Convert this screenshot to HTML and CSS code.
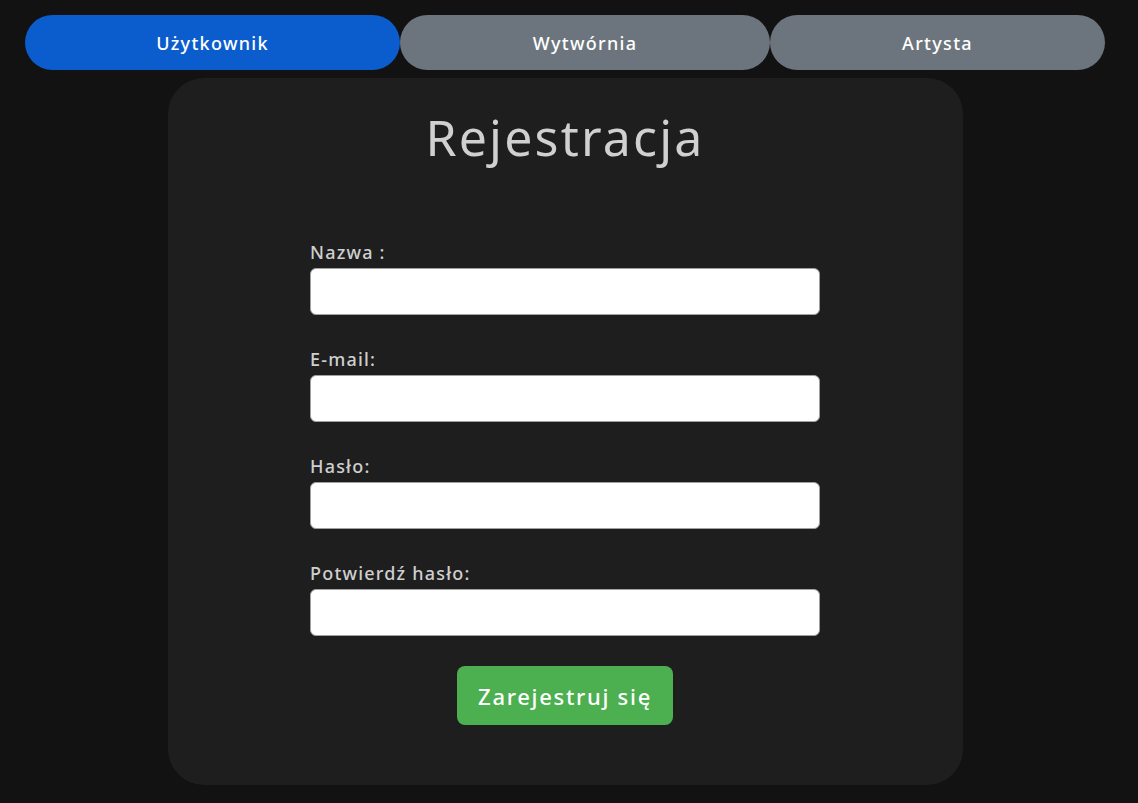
FILE: index.html
```html
<!DOCTYPE html>
<html lang="pl">
<head>
<meta charset="utf-8">
<title>Rejestracja</title>
<link rel="stylesheet" href="styles.css">
</head>
<body>
<div class="page">
  <nav class="tabs">
    <button class="tab tab-active" type="button">Użytkownik</button>
    <button class="tab" type="button">Wytwórnia</button>
    <button class="tab" type="button">Artysta</button>
  </nav>
  <main class="card">
    <h1 class="title">Rejestracja</h1>
    <form class="form">
      <div class="field">
        <label class="label" for="name">Nazwa :</label>
        <input class="input" id="name" type="text">
      </div>
      <div class="field">
        <label class="label" for="email">E-mail:</label>
        <input class="input" id="email" type="email">
      </div>
      <div class="field">
        <label class="label" for="pass">Hasło:</label>
        <input class="input" id="pass" type="password">
      </div>
      <div class="field">
        <label class="label" for="pass2">Potwierdź hasło:</label>
        <input class="input" id="pass2" type="password">
      </div>
      <div class="actions">
        <button class="submit" type="button">Zarejestruj się</button>
      </div>
    </form>
  </main>
</div>
</body>
</html>
```
FILE: styles.css
```css
html, body {
  margin: 0;
  padding: 0;
  background: #121212;
}
body {
  font-family: "Noto Sans", "Open Sans", sans-serif;
  color: #d0d0d0;
}
.page {
  width: 1080px;
  margin-left: 25px;
  padding-top: 15px;
}
.tabs {
  display: grid;
  grid-template-columns: 375fr 370fr 335fr;
  height: 55px;
}
.tab {
  border: none;
  border-radius: 28px;
  background: #6c757d;
  color: #ffffff;
  font-family: inherit;
  font-size: 18px;
  font-weight: 500;
  letter-spacing: 1.3px;
  height: 55px;
  padding: 0;
  cursor: pointer;
}
.tab-active {
  background: #0b5ccd;
}
.card {
  width: 795px;
  margin: 8px auto 0;
  box-sizing: border-box;
  height: 707px;
  background: #1e1e1e;
  border-radius: 36px;
  padding-top: 23px;
}
.title {
  margin: 0;
  text-align: center;
  font-size: 50px;
  font-weight: 400;
  letter-spacing: 2.2px;
  line-height: 72px;
  color: #d0d0d0;
}
.form {
  width: 510px;
  margin: 63px auto 0;
  display: flex;
  flex-direction: column;
}
.field {
  display: flex;
  flex-direction: column;
  margin-bottom: 28px;
}
.label {
  font-size: 18px;
  font-weight: 500;
  letter-spacing: 1.2px;
  line-height: 32px;
  height: 32px;
  color: #cfcfcf;
}
.input {
  box-sizing: border-box;
  height: 47px;
  border: 1px solid #a0a0a0;
  border-radius: 6px;
  background: #ffffff;
  margin: 0;
}
.actions {
  display: flex;
  justify-content: center;
  margin-top: 2px;
}
.submit {
  width: 216px;
  height: 59px;
  border: none;
  border-radius: 8px;
  background: #4caf50;
  color: #ffffff;
  font-family: inherit;
  font-size: 22px;
  font-weight: 500;
  letter-spacing: 1.7px;
  padding: 0;
  cursor: pointer;
}
```
